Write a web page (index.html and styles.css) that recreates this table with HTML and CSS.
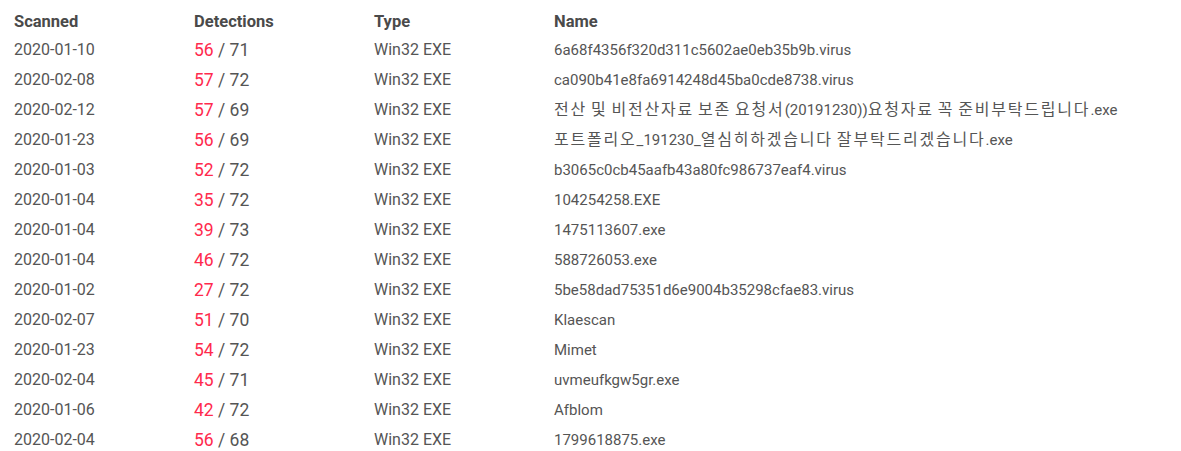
FILE: index.html
```html
<!DOCTYPE html>
<html>
<head>
<meta charset="utf-8">
<link rel="stylesheet" href="styles.css">
</head>
<body>
<table class="scans">
<thead>
<tr><th>Scanned</th><th>Detections</th><th>Type</th><th>Name</th></tr>
</thead>
<tbody>
<tr><td>2020-01-10</td><td class="det"><span class="pos">56</span> / 71</td><td>Win32 EXE</td><td class="name">6a68f4356f320d311c5602ae0eb35b9b.virus</td></tr>
<tr><td>2020-02-08</td><td class="det"><span class="pos">57</span> / 72</td><td>Win32 EXE</td><td class="name">ca090b41e8fa6914248d45ba0cde8738.virus</td></tr>
<tr><td>2020-02-12</td><td class="det"><span class="pos">57</span> / 69</td><td>Win32 EXE</td><td class="name"><span class="ko">전산 및 비전산자료 보존 요청서</span>(20191230))<span class="ko">요청자료 꼭 준비부탁드립니다</span>.exe</td></tr>
<tr><td>2020-01-23</td><td class="det"><span class="pos">56</span> / 69</td><td>Win32 EXE</td><td class="name"><span class="ko">포트폴리오</span>_191230_<span class="ko">열심히하겠습니다 잘부탁드리겠습니다</span>.exe</td></tr>
<tr><td>2020-01-03</td><td class="det"><span class="pos">52</span> / 72</td><td>Win32 EXE</td><td class="name">b3065c0cb45aafb43a80fc986737eaf4.virus</td></tr>
<tr><td>2020-01-04</td><td class="det"><span class="pos">35</span> / 72</td><td>Win32 EXE</td><td class="name">104254258.EXE</td></tr>
<tr><td>2020-01-04</td><td class="det"><span class="pos">39</span> / 73</td><td>Win32 EXE</td><td class="name">1475113607.exe</td></tr>
<tr><td>2020-01-04</td><td class="det"><span class="pos">46</span> / 72</td><td>Win32 EXE</td><td class="name">588726053.exe</td></tr>
<tr><td>2020-01-02</td><td class="det"><span class="pos">27</span> / 72</td><td>Win32 EXE</td><td class="name">5be58dad75351d6e9004b35298cfae83.virus</td></tr>
<tr><td>2020-02-07</td><td class="det"><span class="pos">51</span> / 70</td><td>Win32 EXE</td><td class="name">Klaescan</td></tr>
<tr><td>2020-01-23</td><td class="det"><span class="pos">54</span> / 72</td><td>Win32 EXE</td><td class="name">Mimet</td></tr>
<tr><td>2020-02-04</td><td class="det"><span class="pos">45</span> / 71</td><td>Win32 EXE</td><td class="name">uvmeufkgw5gr.exe</td></tr>
<tr><td>2020-01-06</td><td class="det"><span class="pos">42</span> / 72</td><td>Win32 EXE</td><td class="name">Afblom</td></tr>
<tr><td>2020-02-04</td><td class="det"><span class="pos">56</span> / 68</td><td>Win32 EXE</td><td class="name">1799618875.exe</td></tr>
</tbody>
</table>
</body>
</html>
```
FILE: styles.css
```css
html, body {
  margin: 0;
  padding: 0;
  background: #fff;
}
body {
  font-family: Roboto, "Noto Sans CJK KR", sans-serif;
  color: #555;
}
.scans {
  border-collapse: collapse;
  margin: 8px 0 0 14px;
}
.scans th {
  text-align: left;
  font-weight: 700;
  font-size: 16.5px;
  color: #4a4a4a;
  width: 180px;
  padding: 0;
  height: 27px;
  line-height: 20px;
  vertical-align: middle;
}
.scans td {
  padding: 0;
  height: 30px;
  line-height: 20px;
  font-size: 16px;
  vertical-align: middle;
  white-space: nowrap;
}
.scans td.det {
  font-size: 17.5px;
}
.scans td.name {
  font-size: 15px;
}
.ko {
  font-size: 16px;
  letter-spacing: 1.8px;
  word-spacing: -1.8px;
}
.pos {
  color: #ff2a4d;
}
```
